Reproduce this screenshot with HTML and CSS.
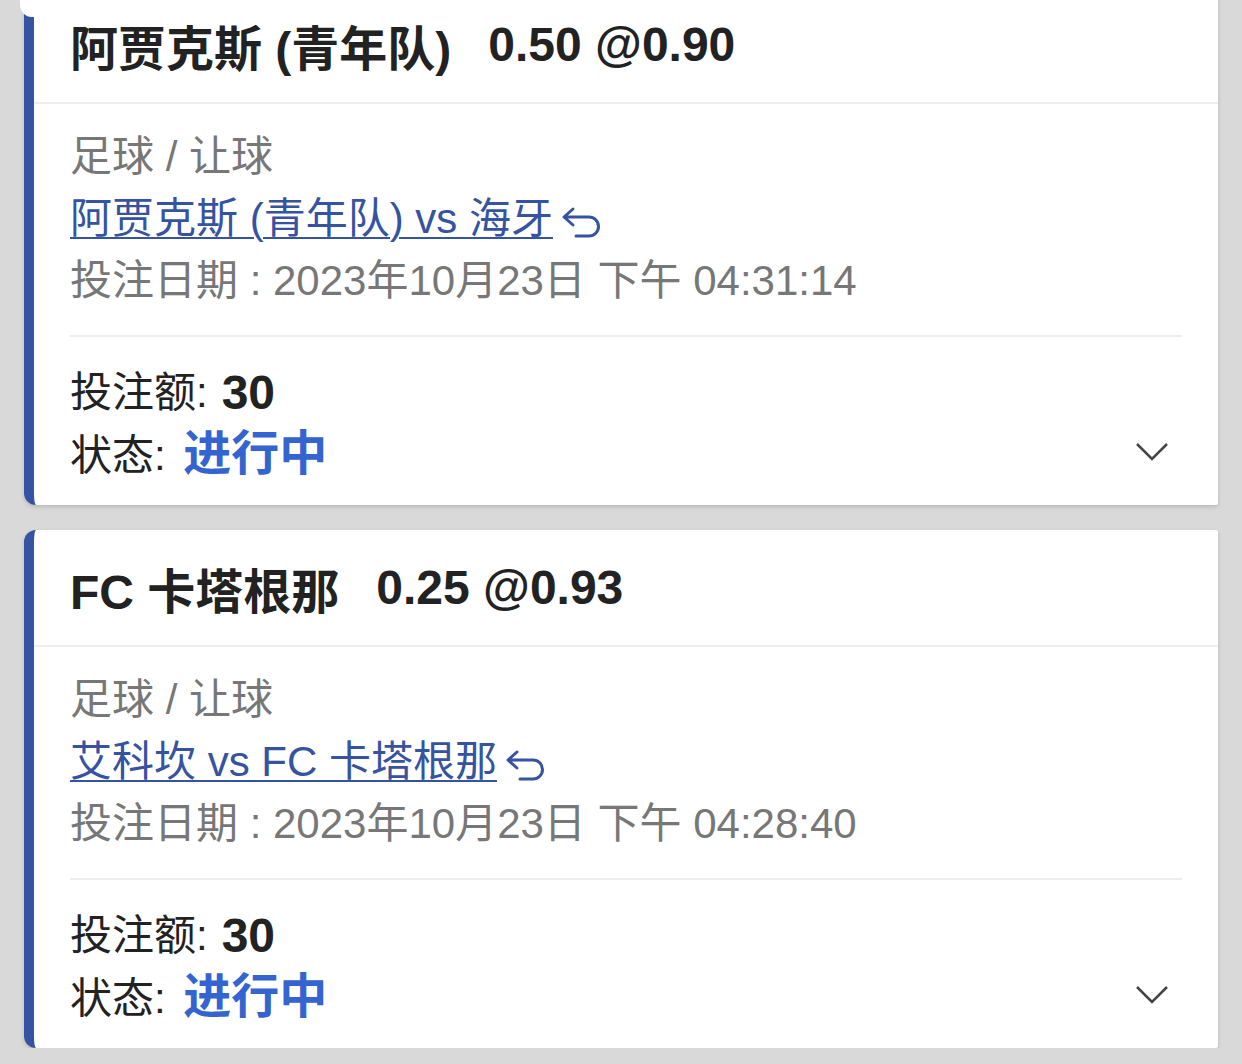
FILE: index.html
```html
<!DOCTYPE html>
<html lang="zh-CN">
<head>
    <meta charset="UTF-8">
    <meta name="viewport" content="width=device-width, initial-scale=1.0">
    <title>投注记录</title>
    <link rel="stylesheet" href="styles.css">
</head>
<body>

    <!-- bottom of the bar above, overlapping the list -->
    <div class="top-bar"></div>

    <div class="bet-list">

        <div class="bet-card">
            <div class="bet-head">
                <span class="bet-team">阿贾克斯 (青年队)</span>
                <span class="bet-odds">0.50 @0.90</span>
            </div>
            <div class="bet-body">
                <div class="bet-line muted">足球 / 让球</div>
                <div class="bet-line">
                    <a href="#" class="bet-match">阿贾克斯 (青年队) vs 海牙</a>
                    <svg class="back-icon" width="40" height="34" viewBox="0 0 40 34">
                        <path d="M12 4 L3 12 L12 20 M3 12 H28 A9.5 9.5 0 0 1 28 31 H15" fill="none" stroke="#3553a1" stroke-width="3" stroke-linecap="round" stroke-linejoin="round"/>
                    </svg>
                </div>
                <div class="bet-line muted">投注日期 : 2023年10月23日 下午 04:31:14</div>
                <div class="bet-sep"></div>
                <div class="bet-line">投注额: <b class="amount">30</b></div>
                <div class="bet-line status-row">
                    <span>状态: <b class="status">进行中</b></span>
                    <svg class="chevron" width="34" height="20" viewBox="0 0 34 20">
                        <path d="M2 2 L17 17 L32 2" fill="none" stroke="#444" stroke-width="2.5"/>
                    </svg>
                </div>
            </div>
        </div>

        <div class="bet-card">
            <div class="bet-head">
                <span class="bet-team">FC 卡塔根那</span>
                <span class="bet-odds">0.25 @0.93</span>
            </div>
            <div class="bet-body">
                <div class="bet-line muted">足球 / 让球</div>
                <div class="bet-line">
                    <a href="#" class="bet-match">艾科坎 vs FC 卡塔根那</a>
                    <svg class="back-icon" width="40" height="34" viewBox="0 0 40 34">
                        <path d="M12 4 L3 12 L12 20 M3 12 H28 A9.5 9.5 0 0 1 28 31 H15" fill="none" stroke="#3553a1" stroke-width="3" stroke-linecap="round" stroke-linejoin="round"/>
                    </svg>
                </div>
                <div class="bet-line muted">投注日期 : 2023年10月23日 下午 04:28:40</div>
                <div class="bet-sep"></div>
                <div class="bet-line">投注额: <b class="amount">30</b></div>
                <div class="bet-line status-row">
                    <span>状态: <b class="status">进行中</b></span>
                    <svg class="chevron" width="34" height="20" viewBox="0 0 34 20">
                        <path d="M2 2 L17 17 L32 2" fill="none" stroke="#444" stroke-width="2.5"/>
                    </svg>
                </div>
            </div>
        </div>

    </div>

</body>
</html>
```

FILE: styles.css
```css
/* styles.css */

body {
    font-family: "Liberation Sans", Arial, "Noto Sans CJK SC", sans-serif;
    background-color: #d9d9d9;
    margin: 0;
    padding: 0;
    color: #222;
}

.top-bar {
    position: absolute;
    top: 0;
    left: 20px;
    width: 1198px;
    height: 17px;
    background: #fff;
    border-radius: 0 0 12px 12px;
    z-index: 2;
}

.bet-list {
    display: flex;
    flex-direction: column;
    gap: 25px;
    padding: 0 24px 0 24px;
    margin-top: -13px;
}

.bet-card {
    background: #fff;
    border-left: 10px solid #3553a1;
    border-radius: 12px 2px 2px 12px;
    box-shadow: 0 2px 4px rgba(0, 0, 0, 0.15);
}

.bet-head {
    height: 115px;
    display: flex;
    align-items: center;
    gap: 37px;
    padding-left: 36px;
    border-bottom: 2px solid #eeeeee;
    font-size: 48px;
    font-weight: bold;
    color: #222;
}

.bet-body {
    padding: 22px 36px 19px 36px;
}

.bet-line {
    font-size: 42px;
    line-height: 62px;
    height: 62px;
    display: flex;
    align-items: center;
    white-space: nowrap;
}

.muted {
    color: #777;
}

.bet-match {
    color: #3553a1;
    text-decoration: underline;
    text-decoration-thickness: 2px;
    text-underline-offset: 4px;
}

.back-icon {
    margin-left: 8px;
    margin-top: 6px;
}

.bet-sep {
    height: 2px;
    background: #eeeeee;
    margin: 23px 0 25px 0;
}

.amount {
    margin-left: 14px;
    font-size: 48px;
}

.status {
    margin-left: 6px;
    color: #3464d0;
    font-size: 48px;
}

.status-row {
    justify-content: space-between;
}

.chevron {
    margin-right: 13px;
    margin-top: -6px;
}
```
